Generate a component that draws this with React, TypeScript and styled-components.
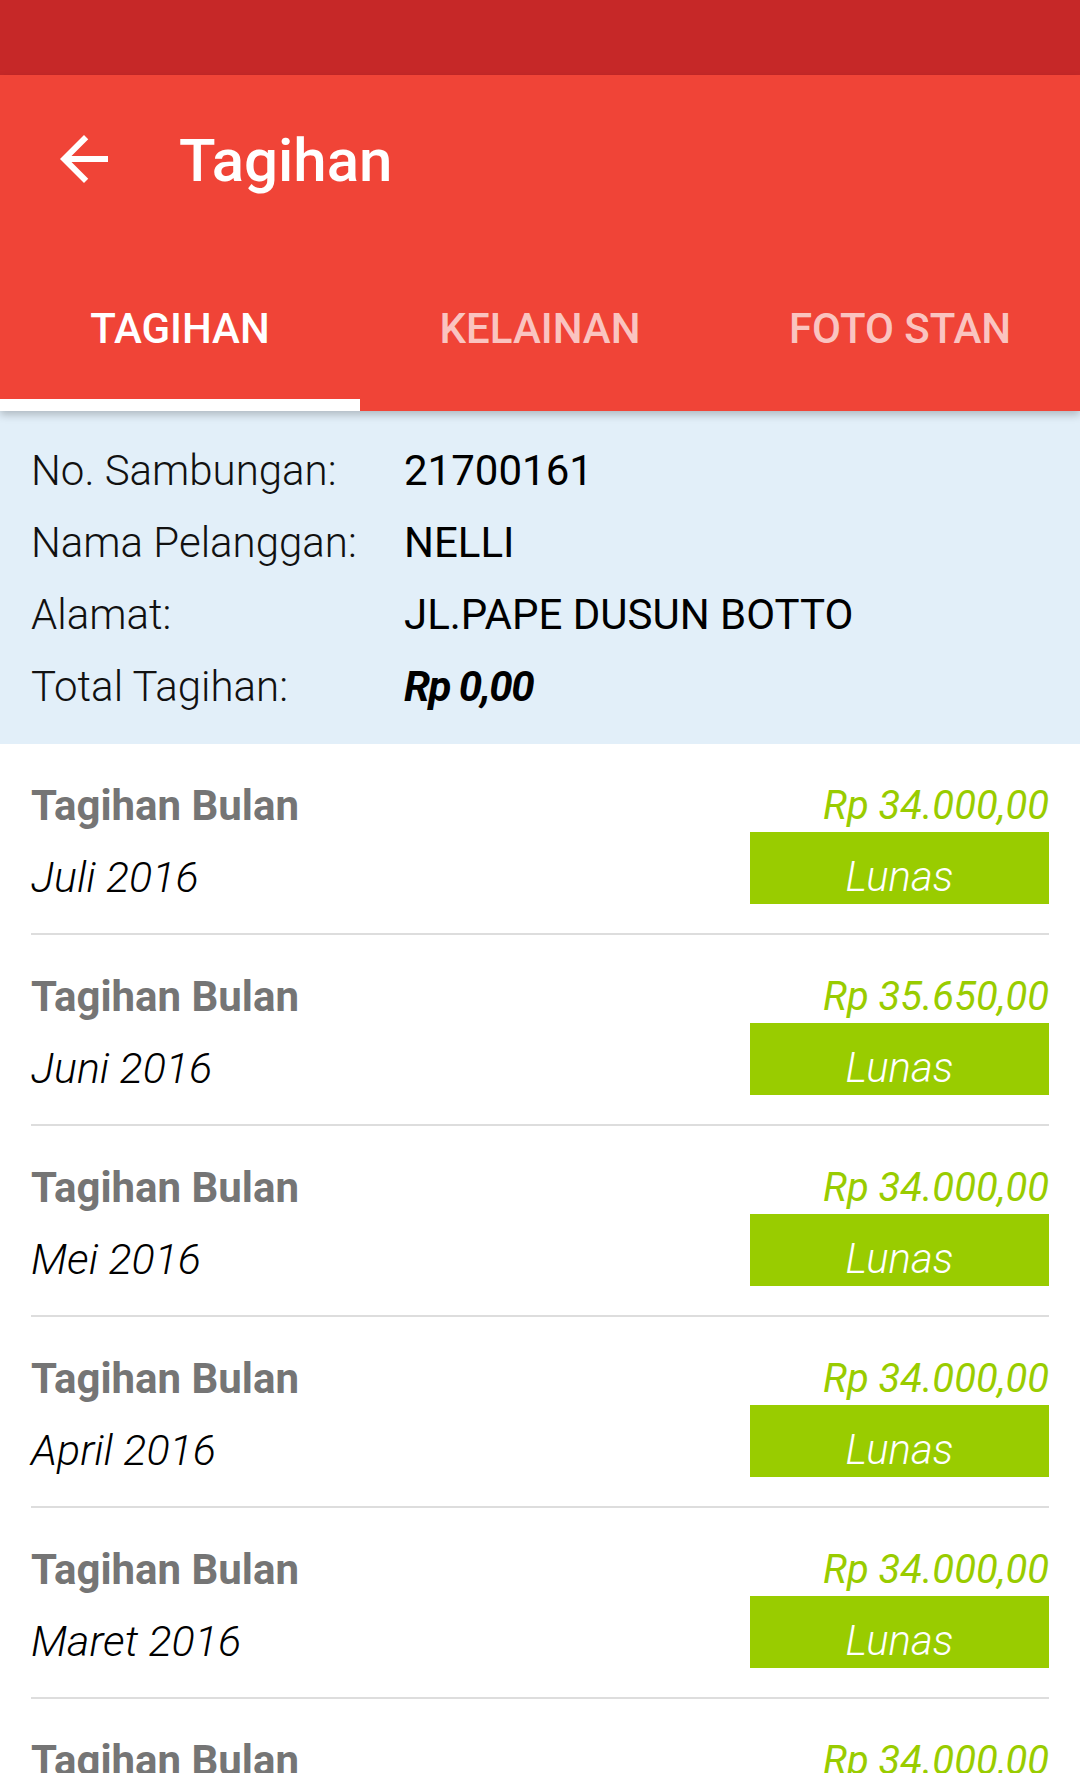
import styled, { createGlobalStyle } from "styled-components";

const GlobalStyle = createGlobalStyle`
    html, body {
        margin: 0;
        padding: 0;
        background: #ffffff;
        font-family: Roboto, "Liberation Sans", sans-serif;
    }
`;

const Page = styled.div`
    width: 1080px;
    height: 1773px;
    overflow: hidden;
    background: #ffffff;
`;

const StatusBar = styled.div`
    height: 75px;
    background: #c62828;
`;

const AppBar = styled.header`
    position: relative;
    z-index: 2;
    background: #f04437;
    box-shadow: 0 4px 8px rgba(0, 0, 0, 0.22);
`;

const Toolbar = styled.div`
    height: 168px;
    display: flex;
    align-items: center;
    padding-left: 48px;
`;

const BackButton = styled.div`
    width: 72px;
    height: 72px;
    display: flex;
    align-items: center;
    justify-content: center;
    margin-right: 59px;
`;

const Title = styled.h1`
    margin: 0;
    color: #ffffff;
    font-size: 60px;
    font-weight: 500;
    line-height: 1;
    padding-top: 4px;
`;

const Tabs = styled.nav`
    display: grid;
    grid-template-columns: repeat(3, 1fr);
    height: 168px;
`;

const Tab = styled.div<{ $active?: boolean }>`
    display: flex;
    align-items: center;
    justify-content: center;
    padding-top: 14px;
    box-sizing: border-box;
    font-size: 42px;
    font-weight: 500;
    color: ${(p) => (p.$active ? "#ffffff" : "rgba(255, 255, 255, 0.7)")};
    border-bottom: 12px solid ${(p) => (p.$active ? "#ffffff" : "transparent")};
`;

const InfoPanel = styled.section`
    background: #e2eff9;
    padding: 24px 31px 21px;
`;

const InfoRow = styled.div`
    display: grid;
    grid-template-columns: 373px 1fr;
    line-height: 72px;
    font-size: 42px;
    color: #111111;
`;

const InfoLabel = styled.span`
    font-weight: 300;
`;

const InfoValue = styled.span<{ $emph?: boolean }>`
    font-weight: ${(p) => (p.$emph ? 700 : 400)};
    font-style: ${(p) => (p.$emph ? "italic" : "normal")};
    letter-spacing: ${(p) => (p.$emph ? "-1.5px" : "0")};
    color: #000000;
`;

const BillList = styled.div`
    padding: 0 31px;
`;

const BillItem = styled.div`
    display: flex;
    justify-content: space-between;
    padding: 37px 0 29px;
    border-bottom: 2px solid #dddddd;
`;

const BillLeft = styled.div`
    display: flex;
    flex-direction: column;
`;

const BillHeading = styled.div`
    font-size: 42px;
    font-weight: 700;
    line-height: 50px;
    color: #757575;
`;

const BillMonth = styled.div`
    margin-top: 21px;
    font-size: 43px;
    font-weight: 300;
    font-style: italic;
    line-height: 50px;
    color: #000000;
`;

const BillRight = styled.div`
    display: flex;
    flex-direction: column;
    align-items: flex-end;
`;

const Amount = styled.div`
    font-size: 40px;
    font-style: italic;
    line-height: 50px;
    color: #99cc00;
`;

const StatusBadge = styled.div`
    margin-top: 1px;
    width: 299px;
    height: 72px;
    box-sizing: border-box;
    padding-top: 18px;
    background: #99cc00;
    color: #ffffff;
    text-align: center;
    font-size: 42px;
    font-weight: 300;
    font-style: italic;
    line-height: 54px;
`;

const bills = [
    { month: "Juli 2016", amount: "Rp 34.000,00" },
    { month: "Juni 2016", amount: "Rp 35.650,00" },
    { month: "Mei 2016", amount: "Rp 34.000,00" },
    { month: "April 2016", amount: "Rp 34.000,00" },
    { month: "Maret 2016", amount: "Rp 34.000,00" },
    { month: "Februari 2016", amount: "Rp 34.000,00" },
];

export default function App() {
    return (
        <Page>
            <GlobalStyle />
            <StatusBar />
            <AppBar>
                <Toolbar>
                    <BackButton>
                        <svg width="72" height="72" viewBox="0 0 24 24" fill="#ffffff">
                            <path d="M20 11H7.83l5.59-5.59L12 4l-8 8 8 8 1.41-1.41L7.83 13H20v-2z" />
                        </svg>
                    </BackButton>
                    <Title>Tagihan</Title>
                </Toolbar>
                <Tabs>
                    <Tab $active>TAGIHAN</Tab>
                    <Tab>KELAINAN</Tab>
                    <Tab>FOTO STAN</Tab>
                </Tabs>
            </AppBar>

            <InfoPanel>
                <InfoRow>
                    <InfoLabel>No. Sambungan:</InfoLabel>
                    <InfoValue>21700161</InfoValue>
                </InfoRow>
                <InfoRow>
                    <InfoLabel>Nama Pelanggan:</InfoLabel>
                    <InfoValue>NELLI</InfoValue>
                </InfoRow>
                <InfoRow>
                    <InfoLabel>Alamat:</InfoLabel>
                    <InfoValue>JL.PAPE DUSUN BOTTO</InfoValue>
                </InfoRow>
                <InfoRow>
                    <InfoLabel>Total Tagihan:</InfoLabel>
                    <InfoValue $emph>Rp 0,00</InfoValue>
                </InfoRow>
            </InfoPanel>

            <BillList>
                {bills.map((b) => (
                    <BillItem key={b.month}>
                        <BillLeft>
                            <BillHeading>Tagihan Bulan</BillHeading>
                            <BillMonth>{b.month}</BillMonth>
                        </BillLeft>
                        <BillRight>
                            <Amount>{b.amount}</Amount>
                            <StatusBadge>Lunas</StatusBadge>
                        </BillRight>
                    </BillItem>
                ))}
            </BillList>
        </Page>
    );
}
